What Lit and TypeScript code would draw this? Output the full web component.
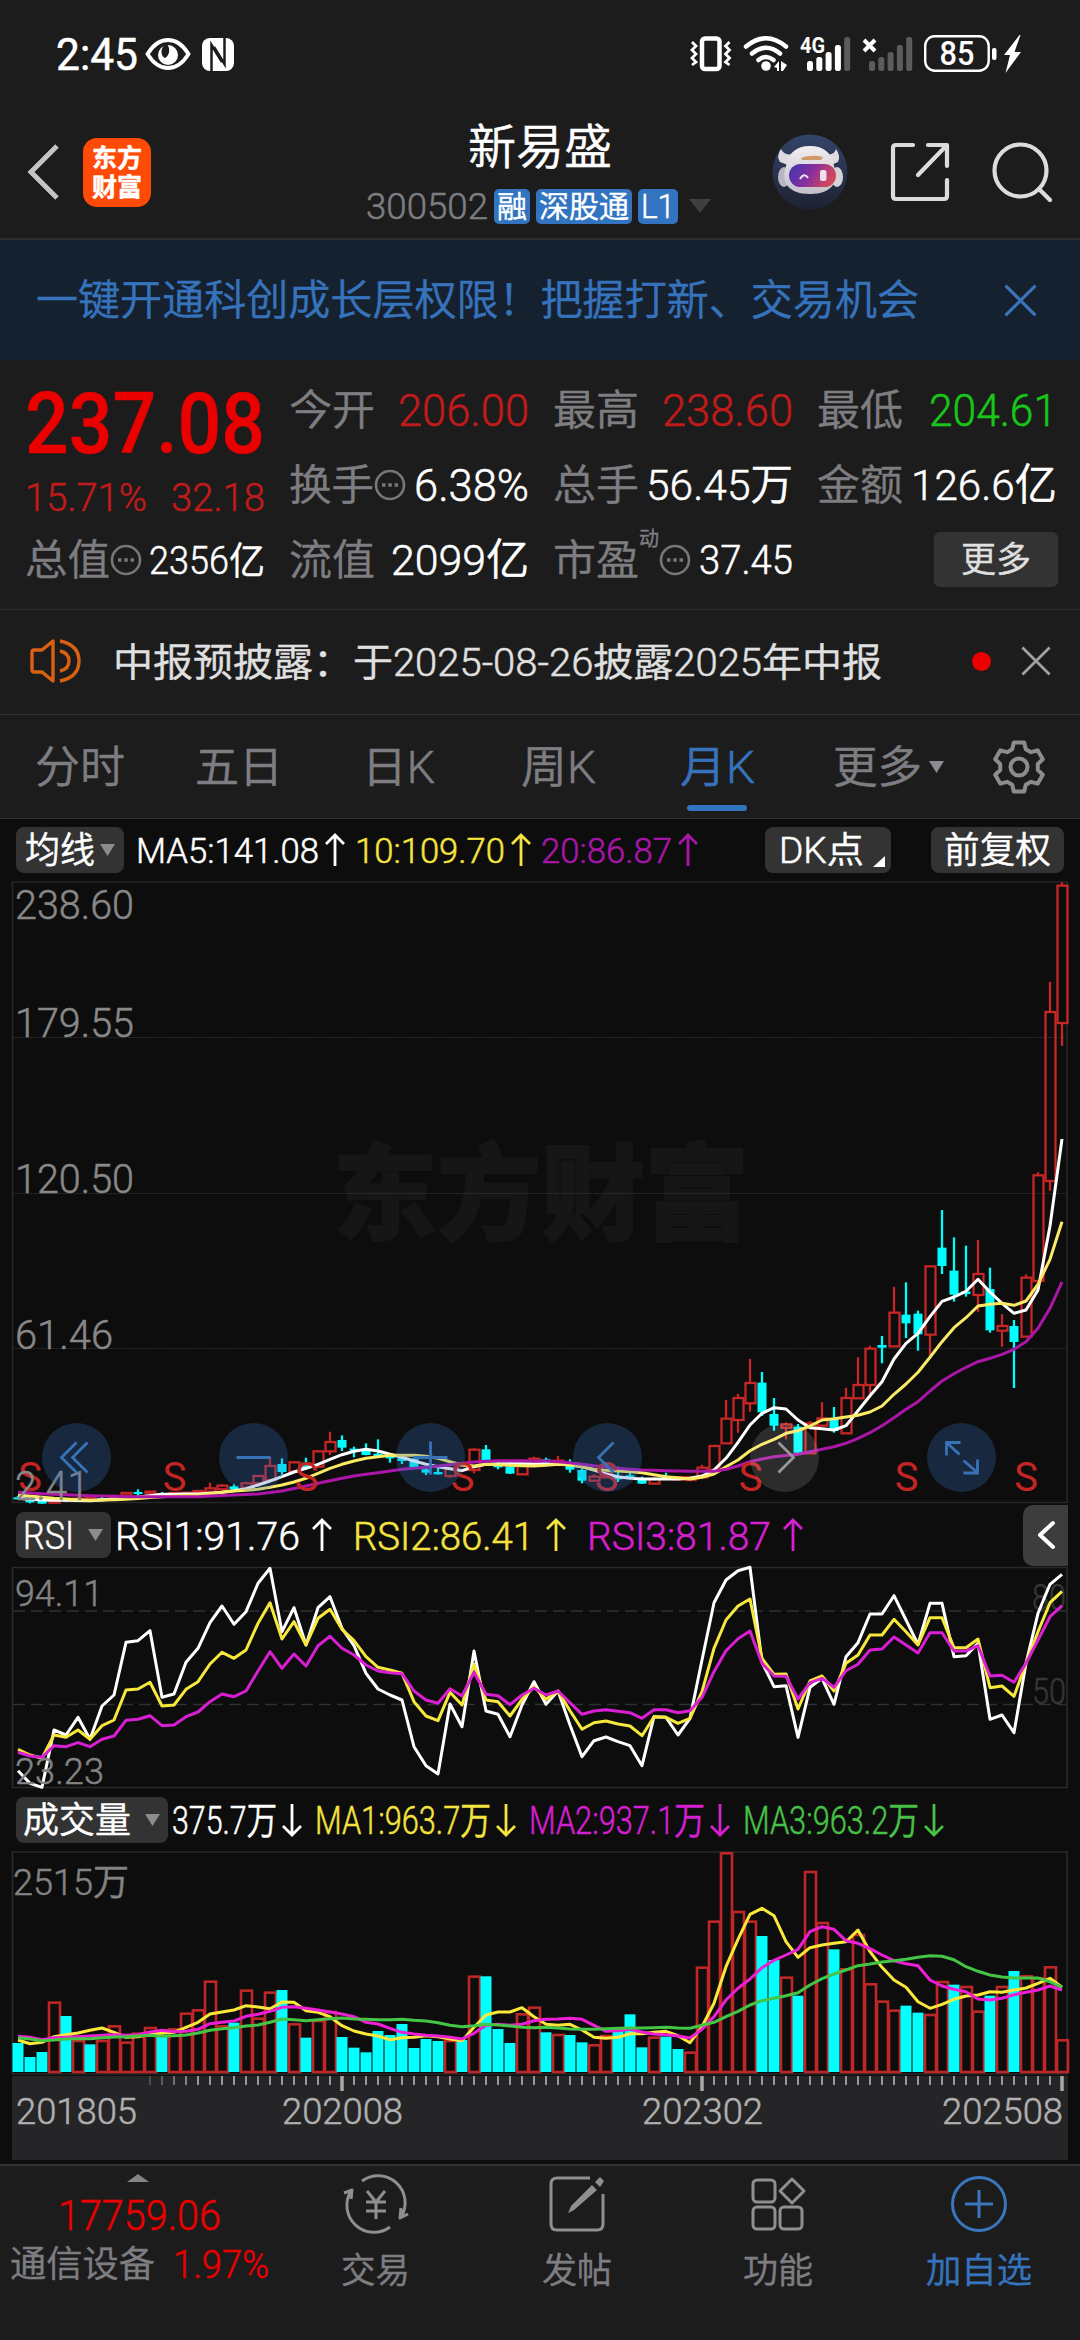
import { LitElement, css, html, svg } from 'lit';
import { customElement } from 'lit/decorators.js';

const COUNT = 88;
const xAt = (i: number) => 18 + i * 12;

// text squeezed to a fixed advance width, vertically centred in its box
const fit = (text: string, width: number, size: number, cls = '') => html`
  <svg class="fit ${cls}" width=${width} height=${size} font-size=${size}>
    <text x="0" y=${size * 0.86} textLength=${width} lengthAdjust="spacingAndGlyphs">${text}</text>
  </svg>`;

const label = (text: string, x: number, y: number, width: number, size: number, cls: string) => svg`
  <text class="label ${cls}" x=${x} y=${y} font-size=${size} textLength=${width} lengthAdjust="spacingAndGlyphs">${text}</text>`;

const line = (values: number[], top: number, cls: string) => svg`
  <polyline class="line ${cls}" points=${values.map((v, i) => `${xAt(i)},${(top + v / 3).toFixed(1)}`).join(' ')}></polyline>`;

// fills the gaps between [index, value] knots
const spread = (knots: number[][]) => {
    const out: number[] = [];
    for (let k = 0; k < knots.length - 1; k++) {
        const [i0, v0] = knots[k];
        const [i1, v1] = knots[k + 1];
        for (let i = i0; i < i1; i++) out.push(v0 + ((v1 - v0) * (i - i0)) / (i1 - i0));
    }
    out.push(knots[knots.length - 1][1]);
    return out;
};

const arrow = (dir: 'up' | 'down', cls: string) => html`
  <svg class="arrow ${cls} ${dir}" width="20" height="34" viewBox="0 0 20 34">
    <path d="M10 33V2M1 11L10 2L19 11"></path>
  </svg>`;

const caret = html`<svg class="caret" width="15" height="12" viewBox="0 0 15 12"><path d="M0 0H15L7.5 12Z"></path></svg>`;
const dots = html`
  <svg class="dots" width="32" height="32" viewBox="0 0 32 32">
    <circle cx="16" cy="16" r="14"></circle>
    <path d="M8 16H11.500M14.300 16H17.800M20.500 16H24"></path>
  </svg>`;
const cross = (size: number, cls: string) => html`
  <svg class="cross ${cls}" width=${size} height=${size} viewBox="0 0 32 32"><path d="M1.500 1.500L30.500 30.500M30.500 1.500L1.500 30.500"></path></svg>`;

// up/down flag, high, body top, body bottom, low
type Candle = [number, number, number, number, number];
const candles: Candle[] = [
    [0, 1008, 1012, 1018, 1020], [0, 1010, 1018, 1027, 1030], [0, 1018, 1020, 1031, 1031], [1, 1018, 1021, 1028, 1028],
    [0, 1014, 1018, 1023, 1026], [1, 1012, 1016, 1022, 1024], [1, 1010, 1014, 1020, 1022], [0, 1010, 1014, 1019, 1022],
    [1, 1006, 1008, 1014, 1016], [1, 997, 999, 1007, 1008], [0, 988, 996, 1002, 1006], [1, 993, 995, 1000, 1004],
    [0, 996, 999, 1004, 1007], [1, 996, 999, 1004, 1006], [1, 996, 998, 1004, 1005], [1, 991, 993, 1000, 1001],
    [1, 968, 985, 995, 997], [1, 972, 977, 988, 990], [0, 973, 979, 988, 990], [1, 965, 970, 983, 985],
    [1, 945, 948, 970, 972], [1, 890, 918, 960, 962], [0, 895, 912, 936, 944], [1, 905, 907, 935, 936],
    [0, 893, 908, 925, 930], [1, 872, 874, 920, 922], [1, 815, 846, 874, 885], [0, 826, 840, 863, 873],
    [0, 860, 866, 872, 892], [0, 850, 868, 885, 886], [0, 838, 881, 888, 890], [0, 880, 888, 895, 908],
    [0, 884, 894, 903, 912], [0, 893, 896, 921, 922], [0, 920, 928, 938, 945], [0, 920, 936, 943, 944],
    [1, 920, 925, 948, 953], [1, 915, 918, 930, 932], [1, 865, 869, 930, 940], [0, 855, 868, 900, 902],
    [0, 903, 915, 922, 928], [0, 905, 920, 941, 942], [1, 912, 915, 943, 944], [1, 890, 896, 912, 914],
    [0, 893, 898, 912, 914], [1, 888, 902, 908, 910], [0, 898, 912, 929, 938], [0, 925, 930, 962, 970],
    [1, 943, 950, 962, 966], [1, 935, 940, 952, 954], [0, 920, 952, 958, 966], [0, 933, 946, 952, 956],
    [0, 950, 956, 971, 972], [1, 950, 957, 971, 972], [0, 938, 950, 956, 958], [1, 948, 952, 958, 960],
    [1, 948, 951, 960, 962], [1, 914, 923, 952, 953], [1, 855, 858, 930, 931], [1, 720, 776, 850, 851],
    [1, 702, 714, 780, 818], [1, 597, 669, 730, 755], [0, 636, 668, 757, 768], [0, 714, 762, 797, 812],
    [1, 787, 793, 803, 838], [0, 792, 800, 878, 880], [1, 783, 790, 880, 881], [1, 727, 775, 797, 800],
    [0, 741, 777, 813, 818], [1, 683, 714, 820, 821], [1, 592, 675, 715, 716], [1, 557, 566, 675, 705],
    [0, 528, 555, 563, 610], [1, 380, 458, 559, 560], [0, 367, 464, 490, 534], [0, 452, 461, 523, 572],
    [1, 317, 319, 524, 585], [0, 150, 263, 318, 342], [0, 232, 332, 404, 425], [0, 257, 394, 402, 410],
    [1, 240, 342, 405, 455], [0, 323, 387, 511, 518], [1, 463, 498, 512, 560], [0, 480, 498, 546, 684],
    [1, 343, 353, 530, 531], [1, 37, 46, 363, 364], [1, -535, -444, 63, 92], [1, -833, -823, -411, -342],
];

const ma5 = spread([
    [0, 1015], [2, 1020], [6, 1022], [9, 1015], [12, 1003], [15, 1002], [17, 997], [18, 992], [19, 986], [20, 975], [21, 963],
    [22, 950], [23, 936], [24, 925], [25, 913], [26, 898], [27, 884], [28, 874], [29, 868], [30, 873], [31, 883], [32, 892],
    [33, 903], [34, 913], [35, 920], [36, 926], [37, 932], [38, 920], [39, 913], [40, 911], [44, 912], [46, 914], [47, 920],
    [48, 930], [49, 942], [50, 950], [51, 955], [52, 957], [55, 957], [56, 955], [57, 948], [58, 930], [59, 895], [60, 847],
    [61, 795], [62, 760], [63, 743], [64, 747], [65, 780], [66, 803], [67, 806], [68, 810], [69, 797], [70, 752], [71, 707],
    [72, 665], [73, 597], [74, 550], [75, 520], [76, 470], [77, 424], [78, 411], [79, 394], [80, 358], [81, 396], [82, 430],
    [83, 460], [84, 450], [85, 390], [86, 198], [87, -63],
]);
const ma10 = spread([
    [0, 1005], [3, 1015], [6, 1021], [9, 1018], [12, 1010], [15, 1005], [18, 993], [20, 988], [21, 982], [22, 975], [23, 966],
    [24, 955], [25, 940], [26, 925], [27, 913], [28, 903], [29, 895], [30, 890], [31, 886], [33, 886], [34, 889], [35, 895],
    [36, 905], [37, 915], [38, 918], [39, 913], [41, 916], [43, 918], [45, 913], [46, 915], [47, 920], [48, 928], [50, 933],
    [52, 938], [54, 950], [56, 957], [57, 952], [58, 942], [59, 920], [60, 900], [61, 872], [62, 853], [63, 838], [64, 820],
    [65, 812], [66, 798], [67, 780], [68, 776], [69, 771], [70, 766], [71, 756], [72, 738], [73, 703], [74, 672], [75, 637],
    [76, 592], [77, 545], [78, 503], [79, 473], [80, 438], [81, 433], [82, 430], [83, 436], [84, 423], [85, 373], [86, 298], [87, 185],
]);
const ma20 = spread([
    [0, 997], [3, 1003], [6, 1007], [9, 1010], [15, 1010], [18, 1005], [20, 1002], [22, 993], [24, 978], [26, 962], [28, 948],
    [30, 938], [32, 928], [34, 922], [36, 914], [38, 906], [40, 902], [44, 903], [46, 908], [48, 917], [50, 925], [52, 930],
    [54, 932], [56, 934], [58, 934], [59, 928], [60, 918], [61, 905], [62, 897], [63, 890], [65, 883], [66, 875], [68, 860],
    [69, 850], [70, 835], [71, 818], [72, 797], [73, 773], [74, 748], [75, 725], [76, 693], [77, 663], [78, 641], [79, 622],
    [80, 605], [81, 595], [82, 583], [83, 568], [84, 545], [85, 505], [86, 445], [87, 366],
]);

const rsi1 = [
    812, 850, 862, 690, 705, 652, 718, 618, 585, 427, 422, 392, 592, 582, 487, 445, 368, 318, 373, 335, 250, 205,
    395, 323, 435, 323, 290, 385, 437, 520, 567, 585, 600, 740, 797, 822, 612, 680, 453, 633, 643, 710, 615, 545,
    613, 573, 675, 770, 722, 711, 725, 737, 797, 650, 652, 705, 655, 480, 308, 240, 212, 202, 487, 560, 557, 712,
    562, 535, 613, 470, 428, 342, 342, 287, 360, 433, 310, 310, 470, 467, 430, 658, 645, 698, 490, 340, 253, 223,
];
const rsi2 = [
    748, 765, 775, 705, 712, 690, 718, 677, 660, 570, 567, 547, 618, 615, 568, 545, 492, 457, 475, 450, 370, 308,
    417, 365, 435, 355, 328, 388, 422, 470, 502, 510, 520, 605, 648, 662, 577, 615, 493, 600, 605, 648, 598, 560,
    598, 573, 632, 688, 668, 663, 672, 678, 707, 650, 652, 670, 655, 575, 445, 360, 318, 297, 475, 523, 522, 627,
    543, 528, 573, 490, 465, 405, 405, 358, 395, 435, 353, 353, 443, 443, 417, 563, 558, 589, 490, 395, 308, 274,
];
const rsi3 = [
    757, 768, 772, 737, 740, 728, 740, 718, 708, 661, 658, 647, 677, 675, 650, 636, 605, 582, 590, 573, 513, 455,
    505, 462, 498, 437, 409, 445, 465, 495, 513, 518, 521, 573, 600, 610, 566, 588, 517, 583, 587, 614, 585, 565,
    585, 573, 608, 643, 633, 629, 634, 638, 655, 629, 629, 638, 632, 592, 515, 452, 416, 393, 490, 528, 529, 597,
    548, 535, 562, 512, 493, 450, 447, 411, 435, 459, 398, 398, 453, 453, 437, 528, 526, 547, 490, 420, 350, 317,
];

const volumes = [
    759, 801, 786, 635, 678, 750, 763, 750, 706, 755, 728, 711, 735, 715, 668, 658, 572, 706, 698, 599, 683, 605,
    600, 700, 743, 690, 663, 741, 773, 787, 723, 735, 702, 774, 747, 753, 750, 750, 557, 559, 717, 759, 670, 650,
    727, 732, 735, 757, 763, 735, 713, 673, 772, 740, 740, 777, 785, 530, 392, 187, 363, 392, 438, 510, 560, 617,
    243, 396, 478, 535, 432, 580, 632, 659, 647, 668, 672, 573, 584, 588, 662, 617, 588, 543, 556, 562, 529, 748,
];
const fallVolumes = new Set([
    0, 1, 2, 4, 6, 12, 18, 22, 24, 27, 28, 29, 30, 31, 32, 33, 34, 35, 37, 39, 40, 41, 44, 46, 47, 50, 51, 52, 54, 55,
    62, 63, 65, 68, 74, 75, 78, 81, 83,
]);
const vol1 = [
    750, 761, 757, 740, 734, 729, 721, 714, 727, 742, 740, 733, 730, 727, 712, 697, 672, 666, 660, 647, 651, 656,
    636, 637, 662, 667, 680, 707, 723, 732, 738, 749, 743, 742, 737, 740, 747, 752, 712, 675, 666, 666, 653, 680,
    703, 706, 703, 720, 742, 745, 742, 731, 731, 727, 724, 737, 758, 710, 640, 530, 448, 373, 355, 377, 455, 502,
    473, 465, 460, 455, 420, 485, 532, 570, 592, 635, 655, 643, 628, 618, 615, 605, 607, 600, 594, 580, 565, 592,
];
const vol2 = [
    739, 742, 749, 743, 742, 740, 738, 736, 734, 736, 734, 726, 721, 725, 724, 718, 701, 697, 693, 679, 673, 664,
    652, 650, 655, 660, 666, 672, 680, 697, 702, 715, 727, 732, 736, 738, 742, 747, 730, 706, 703, 706, 703, 692,
    688, 687, 685, 688, 706, 724, 722, 718, 726, 732, 734, 738, 744, 718, 680, 630, 595, 567, 533, 511, 495, 478,
    425, 410, 418, 452, 460, 476, 495, 512, 521, 527, 570, 588, 598, 605, 627, 630, 625, 614, 607, 600, 588, 600,
];
const vol3 = [
    743, 747, 752, 750, 747, 746, 746, 743, 741, 740, 738, 736, 739, 737, 735, 729, 721, 716, 713, 708, 705, 697,
    687, 689, 692, 689, 686, 684, 687, 688, 689, 689, 688, 691, 693, 698, 706, 710, 707, 703, 705, 708, 712, 713,
    712, 714, 717, 718, 718, 716, 715, 714, 714, 713, 712, 714, 715, 706, 697, 680, 664, 645, 632, 625, 617, 608,
    585, 566, 552, 540, 527, 522, 516, 512, 508, 502, 497, 499, 509, 530, 544, 555, 561, 564, 564, 564, 575, 592,
];

const shared = css`
    :host {
      display: block;
      font-family: Roboto, "Noto Sans CJK SC", sans-serif;
      font-weight: 350;
    }

    svg {
      display: block;
      flex: none;
      overflow: visible;
    }

    .fit, .label { fill: currentColor; stroke: currentColor; stroke-width: 0.5; }
    .fit { color: #fff; }
    .fit.dim { color: #7e7e82; }
    .fit.soft { color: #e0e0e0; }
    .fit.bold { font-weight: 700; }
    .fit.medium { font-weight: 500; }
    .fit.yellow { color: #f5e340; }
    .fit.magenta { color: #d51fd0; }
    .fit.purple { color: #a816a8; }
    .fit.lime { color: #48c048; }
    .fit.hot { color: #eb0000; }
    .fit.red { color: #c01a1a; }
    .fit.green { color: #17c617; }
    .fit.blue { color: #3673bc; }
`;

@customElement('kline-chart')
export class KlineChart extends LitElement {
    private candle([up, high, top, bottom, low]: Candle, i: number) {
        const x = xAt(i);
        const y = (v: number) => 1160 + v / 3;
        if (!up) {
            return svg`
        <path class="fall" d="M${x} ${y(high)}V${y(low)}"></path>
        <rect class="fall-body" x=${x - 4.5} y=${y(top)} width="9" height=${y(bottom) - y(top)}></rect>`;
        }
        return svg`
      <path class="rise" d="M${x} ${y(high)}V${y(top)}M${x} ${y(bottom)}V${y(low)}"></path>
      <rect class="rise" x=${x - 4.5} y=${y(top)} width="10" height=${y(bottom) - y(top)}></rect>`;
    }

    render() {
        return html`
      <svg width="1080" height="623" viewBox="0 881 1080 623">
        <text class="mark" x="333" y="1232" font-size="104" textLength="416">东方财富</text>
        <path class="grid" d="M13 1037.500H1066M13 1193.500H1066M13 1348.500H1066"></path>
        <path class="frame" d="M12.500 882H1067V1502.500H12.500Z"></path>
        ${candles.map((c, i) => this.candle(c, i))}
        ${line(ma5, 1160, 'white')}
        ${line(ma10, 1160, 'yellow')}
        ${line(ma20, 1160, 'purple')}
        ${[30, 174.5, 306.5, 462.5, 606.5, 750.5, 906.5, 1026].map((x) => svg`<text class="sell" x=${x} y="1491" font-size="40">S</text>`)}
        ${label('238.60', 15, 919, 119, 40, 'tick')}
        ${label('179.55', 15, 1037, 119, 40, 'tick')}
        ${label('120.50', 15, 1193, 119, 40, 'tick')}
        ${label('61.46', 15, 1349, 98, 40, 'tick')}
        ${label('2.41', 15, 1500, 74, 40, 'tick')}
      </svg>
      <div class="tools">
        <svg viewBox="-34.500 -34.500 69 69"><circle r="34.500"></circle><path d="M0 -15L-15 0L0 15M11 -15L-4 0L11 15"></path></svg>
        <svg viewBox="-34.500 -34.500 69 69"><circle r="34.500"></circle><path d="M-17 0H17"></path></svg>
        <svg viewBox="-34.500 -34.500 69 69"><circle r="34.500"></circle><path d="M-17 0H17M0 -16V17"></path></svg>
        <svg viewBox="-34.500 -34.500 69 69"><circle r="34.500"></circle><path d="M6 -15L-9 0L6 15"></path></svg>
        <svg class="off" viewBox="-34.500 -34.500 69 69"><circle r="34.500"></circle><path d="M-6 -15L9 0L-6 15"></path></svg>
        <svg viewBox="-34.500 -34.500 69 69"><circle r="34.500"></circle><path d="M-15 -2V-15H-1M-15 -15L-2 -3M2 3L16 15M16 2V15.500H2"></path></svg>
      </div>
    `;
    }

    static styles = [shared, css`
    :host { position: relative; }

    .mark { fill: #161616; stroke: #161616; stroke-width: 2; font-weight: 900; }
    .grid { fill: none; stroke: #303030; stroke-width: 1; stroke-dasharray: 1.500 1; }
    .frame { fill: none; stroke: #262626; stroke-width: 1.700; }
    .rise { fill: none; stroke: #c62626; stroke-width: 2.300; }
    .fall { fill: none; stroke: #00fbfb; stroke-width: 2.300; }
    .fall-body { fill: #00ffff; }
    .line { fill: none; stroke-width: 3; stroke-linejoin: round; }
    .line.white { stroke: #fff; }
    .line.yellow { stroke: #fbea66; }
    .line.purple { stroke: #ab16a9; }
    .sell { fill: #c32424; text-anchor: middle; font-weight: 400; }
    .tick { color: #888; }

    .tools {
      position: absolute;
      left: 42px;
      bottom: 12px;
      display: flex;
      gap: 108px;
    }

    .tools svg { width: 69px; height: 69px; }
    .tools circle { fill: rgba(50, 116, 200, 0.27); }
    .tools path { fill: none; stroke: #3873b8; stroke-width: 2.800; }
    .tools .off circle { fill: rgba(255, 255, 255, 0.13); }
    .tools .off path { stroke: #98989b; }
  `];
}

@customElement('rsi-chart')
export class RsiChart extends LitElement {
    render() {
        return html`
      <svg width="1080" height="222" viewBox="0 1567 1080 222">
        <path class="frame" d="M12.500 1567.500H1067V1787.500H12.500Z"></path>
        <path class="grid" d="M13 1611H1066M13 1704.500H1066"></path>
        ${label('80', 1032, 1610, 34, 36, 'level')}
        ${label('50', 1032, 1704, 34, 36, 'level')}
        ${line(rsi1, 1500, 'white')}
        ${line(rsi2, 1500, 'yellow')}
        ${line(rsi3, 1500, 'magenta')}
        ${label('94.11', 15, 1606, 88, 37, 'tick')}
        ${label('23.23', 15, 1784, 89, 37, 'tick')}
      </svg>
    `;
    }

    static styles = [shared, css`
    .frame { fill: none; stroke: #2a2a2a; stroke-width: 1.700; }
    .grid { fill: none; stroke: #303030; stroke-width: 1.500; stroke-dasharray: 12 6; }
    .line { fill: none; stroke-width: 3; stroke-linejoin: round; }
    .line.white { stroke: #fff; }
    .line.yellow { stroke: #f8e83c; }
    .line.magenta { stroke: #d820d2; }
    .tick { color: #838383; }
    .level { color: #363636; }
  `];
}

@customElement('volume-chart')
export class VolumeChart extends LitElement {
    private bar(value: number, i: number) {
        const y = 1790 + value / 3;
        return fallVolumes.has(i)
            ? svg`<rect class="fall" x=${xAt(i) - 5.5} y=${y} width="11" height=${2072 - y}></rect>`
            : svg`<rect class="rise" x=${xAt(i) - 5} y=${y + 1} width="11" height=${2071 - y}></rect>`;
    }

    render() {
        return html`
      <svg width="1080" height="309" viewBox="0 1851 1080 309">
        <path class="frame" d="M12.500 1852H1067V2074H12.500Z"></path>
        ${volumes.map((v, i) => this.bar(v, i))}
        ${line(vol1, 1790, 'yellow')}
        ${line(vol2, 1790, 'magenta')}
        ${line(vol3, 1790, 'green')}
        ${label('2515万', 13, 1895, 116, 36, 'tick')}
        <rect class="axis" x="12" y="2076" width="1056" height="84"></rect>
        ${Array.from({ length: COUNT - 11 }, (_, k) => k + 11).map((i) => (i - 27) % 30 === 0
            ? svg`<path class="major" d="M${xAt(i)} 2076V2091"></path>`
            : svg`<path class="minor" opacity=${Math.min(1, (i - 9) / 6)} d="M${xAt(i)} 2076V2085"></path>`)}
        ${label('201805', 16, 2124, 121, 37, 'date')}
        ${label('202008', 282, 2124, 121, 37, 'date')}
        ${label('202302', 642, 2124, 121, 37, 'date')}
        ${label('202508', 942, 2124, 121, 37, 'date')}
      </svg>
    `;
    }

    static styles = [shared, css`
    .frame { fill: none; stroke: #2a2a2a; stroke-width: 1.700; }
    .rise { fill: none; stroke: #bf2727; stroke-width: 2.600; }
    .fall { fill: #00ffff; }
    .line { fill: none; stroke-width: 3; stroke-linejoin: round; }
    .line.yellow { stroke: #fce83a; }
    .line.magenta { stroke: #ec1fd4; }
    .line.green { stroke: #45c545; }
    .axis { fill: #252527; }
    .major { stroke: #a9a9a9; stroke-width: 3.500; }
    .minor { stroke: #98989a; stroke-width: 2; }
    .tick { color: #838383; }
    .date { color: #b0b0b0; }
  `];
}

@customElement('app-root')
export class AppRoot extends LitElement {
    private bars(x: number, live: number) {
        return [10, 14, 19, 26, 34].map((h, i) => svg`
      <rect class=${i < live ? 'on' : 'off'} x=${x + i * 9.3} y=${36 - h} width="6" height=${h} rx="2.500"></rect>`);
    }

    private gear() {
        const pts: string[] = [];
        for (let t = 0; t < 6; t++) {
            const mid = t * 60 - 90;
            for (const [off, r] of [[-21, 19], [-12, 25], [12, 25], [21, 19]]) {
                const a = ((mid + off) * Math.PI) / 180;
                pts.push(`${(r * Math.cos(a)).toFixed(1)},${(r * Math.sin(a)).toFixed(1)}`);
            }
        }
        return pts.join(' ');
    }

    private statusBar() {
        return html`
      <div class="status">
        <div class="status-side">
          ${fit('2:45', 82, 44, 'regular')}
          <svg class="eye" width="46" height="32" viewBox="0 0 46 32">
            <path class="ring" d="M2.500 16C8 7 15 2 23 2S38 7 43.500 16C38 25 31 30 23 30S8 25 2.500 16Z"></path>
            <circle class="on" cx="23" cy="17" r="10"></circle>
            <path class="pupil" d="M22 6C15 8 15 18 20 20C24 18 26 11 22 6Z"></path>
          </svg>
          <svg class="nfc" width="32" height="33" viewBox="0 0 32 33">
            <rect class="on" width="32" height="33" rx="8"></rect>
            <path class="cut" d="M9.500 33V7L20 24M22.500 0V26L12 9"></path>
          </svg>
        </div>
        <svg class="signals" width="332" height="38" viewBox="0 0 332 38">
          <rect class="stroke" x="12" y="3.500" width="17.500" height="30.500" rx="3"></rect>
          <path class="thin" d="M2 7L6 11L2 15L6 19L2 23L6 27L2 30M39.500 7L35.500 11L39.500 15L35.500 19L39.500 23L35.500 27L39.500 30"></path>
          <path class="arc" d="M56 11.500Q76 -5 96 11.500M62 18.500Q76 7 90 18.500M68.500 25Q76 19 83.500 25"></path>
          <circle class="on" cx="76" cy="31" r="4.800"></circle>
          <path class="on" d="M84 32L89 26V36H87V33ZM91 26L97 30L93 36H91Z"></path>
          <text class="net" x="110" y="18" font-size="22" textLength="25" lengthAdjust="spacingAndGlyphs">4G</text>
          ${this.bars(117, 4)}
          <path class="x" d="M174 5L185 16M185 5L174 16"></path>
          ${this.bars(179, 0)}
          <rect class="case" x="235.200" y="1.200" width="63.500" height="34.500" rx="9.500"></rect>
          <rect class="on" x="302" y="13" width="4.500" height="12" rx="2"></rect>
          <text class="level" x="249.500" y="29.500" font-size="33" textLength="35" lengthAdjust="spacingAndGlyphs">85</text>
          <path class="on" d="M329.500 0L314 20H320L315.500 38L331 17H324.500L330.500 0Z"></path>
        </svg>
      </div>`;
    }

    private header() {
        return html`
      <header>
        <div class="head-left">
          <svg width="33" height="56" viewBox="0 0 33 56"><path class="back" d="M30 2L4 28L30 54"></path></svg>
          <div class="logo">${fit('东方', 50, 25, 'bold')}${fit('财富', 50, 25, 'bold')}</div>
        </div>
        <div class="head-title">
          ${fit('新易盛', 144, 48)}
          <div class="code">
            ${fit('300502', 122, 36, 'dim')}
            <span class="badge">${fit('融', 30, 30)}</span>
            <span class="badge">${fit('深股通', 90, 30)}</span>
            <span class="badge">${fit('L1', 34, 34)}</span>
            <svg class="pick" width="22" height="14" viewBox="0 0 22 14"><path d="M0 0H22L11 14Z"></path></svg>
          </div>
        </div>
        <div class="head-right">
          <svg width="76" height="76" viewBox="0 0 76 76">
            <defs>
              <linearGradient id="sky" x1="0" y1="0" x2="0" y2="1"><stop offset="0" stop-color="#33446a"></stop><stop offset="1" stop-color="#1d2230"></stop></linearGradient>
              <linearGradient id="shell" x1="0" y1="0" x2="0" y2="1"><stop offset="0" stop-color="#f1eef0"></stop><stop offset="1" stop-color="#c3bfc8"></stop></linearGradient>
              <linearGradient id="visor" x1="0" y1="0" x2="1" y2="0.300"><stop offset="0" stop-color="#3b35b4"></stop><stop offset="0.550" stop-color="#8a2f9c"></stop><stop offset="1" stop-color="#d0475c"></stop></linearGradient>
            </defs>
            <circle cx="38" cy="38" r="37.500" fill="url(#sky)"></circle>
            <path d="M9 15Q4 22 8 28L16 31L21 20Q12 22 9 15ZM64 15Q69 22 66 28L59 31L54 20Q62 22 64 15Z" fill="#dddbe0"></path>
            <ellipse cx="12" cy="43" rx="6" ry="10" fill="#b9b6c0"></ellipse>
            <ellipse cx="65" cy="43" rx="6" ry="10" fill="#d5d2d8"></ellipse>
            <path d="M38 12C52 12 60 19 62 32C67 47 61 60 38 60S9 47 14 32C16 19 24 12 38 12Z" fill="url(#shell)"></path>
            <rect x="17" y="30" width="47" height="23" rx="11.500" fill="url(#visor)"></rect>
            <path d="M28 45Q32 38 36 44" fill="none" stroke="#e9dff8" stroke-width="2"></path>
            <rect x="48" y="36" width="6.500" height="11" rx="2" fill="#f0ddea"></rect>
            <path d="M29 24Q39 20 51 23L49 26H30Z" fill="#cf9a6a"></path>
          </svg>
          <svg width="60" height="60" viewBox="0 0 60 60"><path class="tool" d="M23 3H6Q3 3 3 6V54Q3 57 6 57H54Q57 57 57 54V38M38 3H57V24M56 4L28 33"></path></svg>
          <svg width="60" height="60" viewBox="0 0 60 60"><circle class="tool" cx="28.500" cy="28.500" r="26"></circle><path class="tool" d="M47 47L58 58"></path></svg>
        </div>
      </header>`;
    }

    private quote() {
        return html`
      <section class="quote">
        <div class="price">
          ${fit('237.08', 240, 86, 'hot medium')}
          <div class="change">${fit('15.71%', 122, 39, 'red')}${fit('32.18', 94, 39, 'red')}</div>
        </div>
        <div class="cell">${fit('今开', 86, 42, 'dim')}${fit('206.00', 131, 44, 'red')}</div>
        <div class="cell">${fit('最高', 86, 42, 'dim')}${fit('238.60', 131, 44, 'red')}</div>
        <div class="cell">${fit('最低', 86, 42, 'dim')}${fit('204.61', 128, 44, 'green')}</div>
        <div class="cell"><div class="name">${fit('换手', 85, 42, 'dim')}${dots}</div>${fit('6.38%', 115, 44)}</div>
        <div class="cell">${fit('总手', 86, 42, 'dim')}${fit('56.45万', 147, 43)}</div>
        <div class="cell">${fit('金额', 86, 42, 'dim')}${fit('126.6亿', 146, 43)}</div>
        <div class="cell"><div class="name">${fit('总值', 85, 42, 'dim')}${dots}</div>${fit('2356亿', 116, 38)}</div>
        <div class="cell">${fit('流值', 86, 42, 'dim')}${fit('2099亿', 138, 43)}</div>
        <div class="cell"><div class="name">${fit('市盈', 86, 42, 'dim')}<span class="sup">${fit('动', 20, 20, 'dim')}</span>${dots}</div>${fit('37.45', 94, 40)}</div>
        <div class="cell end"><span class="more">${fit('更多', 70, 35, 'soft')}</span></div>
      </section>`;
    }

    private tabs() {
        const items: [string, number][] = [['分时', 90], ['五日', 88], ['日K', 73], ['周K', 75], ['月K', 75]];
        return html`
      <nav class="tabs">
        ${items.map(([text, width]) => html`
          <div class="tab ${text === '月K' ? 'current' : ''}">${fit(text, width, 44, text === '月K' ? 'blue' : 'dim')}</div>`)}
        <div class="tab-more">${fit('更多', 89, 44, 'dim')}${caret}</div>
        <svg width="52" height="52" viewBox="-26 -26 52 52"><polygon class="gear" points=${this.gear()}></polygon><circle class="gear" r="8.500"></circle></svg>
      </nav>`;
    }

    render() {
        return html`
      ${this.statusBar()}
      ${this.header()}
      <div class="banner">${fit('一键开通科创成长层权限！把握打新、交易机会', 883, 42, 'blue')}${cross(33, 'blue')}</div>
      ${this.quote()}
      <div class="notice">
        <svg width="52" height="44" viewBox="0 0 52 44"><path class="horn" d="M2 13Q2 11 4 11H12L23 2V42L12 33H4Q2 33 2 31ZM30 2Q49 6 49 22T30 42M30 12Q39 14 39 22T30 32"></path></svg>
        ${fit('中报预披露：于2025-08-26披露2025年中报', 769, 39, 'soft')}
        <i class="dot"></i>
        ${cross(30, 'grey')}
      </div>
      ${this.tabs()}
      <main>
        <div class="bar ma">
          <span class="chip">${fit('均线', 70, 36)}${caret}</span>
          <span class="pair">${fit('MA5:141.08', 183, 35)}${arrow('up', 'white')}</span>
          <span class="pair">${fit('10:109.70', 150, 35, 'yellow')}${arrow('up', 'yellow')}</span>
          <span class="pair">${fit('20:86.87', 131, 35, 'purple')}${arrow('up', 'purple')}</span>
          <span class="chip dk">${fit('DK点', 85, 36)}<svg width="12" height="11" viewBox="0 0 12 11"><path class="corner" d="M12 0V11H0Z"></path></svg></span>
          <span class="chip right">${fit('前复权', 107, 36)}</span>
        </div>
        <kline-chart></kline-chart>
        <div class="bar rsi">
          <span class="chip wide">${fit('RSI', 51, 38)}${caret}</span>
          <span class="pair">${fit('RSI1:91.76', 185, 39)}${arrow('up', 'white')}</span>
          <span class="pair">${fit('RSI2:86.41', 181, 39, 'yellow')}${arrow('up', 'yellow')}</span>
          <span class="pair">${fit('RSI3:81.87', 184, 39, 'magenta')}${arrow('up', 'magenta')}</span>
          <span class="drawer"><svg width="18" height="28" viewBox="0 0 18 28"><path d="M16 2L3 14L16 26"></path></svg></span>
        </div>
        <rsi-chart></rsi-chart>
        <div class="bar vol">
          <span class="chip wide">${fit('成交量', 108, 36)}${caret}</span>
          <span class="pair">${fit('375.7万', 105, 38)}${arrow('down', 'white')}</span>
          <span class="pair">${fit('MA1:963.7万', 176, 38, 'yellow')}${arrow('down', 'yellow')}</span>
          <span class="pair">${fit('MA2:937.1万', 176, 38, 'magenta')}${arrow('down', 'magenta')}</span>
          <span class="pair">${fit('MA3:963.2万', 176, 38, 'lime')}${arrow('down', 'lime')}</span>
        </div>
        <volume-chart></volume-chart>
      </main>
      <footer>
        <div class="index">
          <svg class="peak" width="22" height="8" viewBox="0 0 22 8"><path d="M0 8L11 0L22 8Z"></path></svg>
          ${fit('17759.06', 163, 42, 'hot')}
          <div class="sector">${fit('通信设备', 145, 36, 'dim')}${fit('1.97%', 96, 38, 'hot')}</div>
        </div>
        <div class="action">
          <svg width="66" height="58" viewBox="-33 -29 66 58">
            <path class="icon" d="M-14 -23A27 27 0 0 1 25 13M14 23A27 27 0 0 1 -25 -13M-32 -11L-24 -14L-25 -5M32 10L24 14L25 4M-9 -13L0 -2L9 -13M0 -2V15M-10 -2H10M-10 7H10"></path>
          </svg>
          ${fit('交易', 69, 35, 'dim')}
        </div>
        <div class="action">
          <svg width="66" height="58" viewBox="-33 -29 66 58">
            <path class="icon" d="M13 -26H-20Q-26 -26 -26 -20V20Q-26 26 -20 26H20Q26 26 26 20V-10"></path>
            <path class="pen" d="M15 -19L20 -14L-3 6L-9 9L-6 2ZM18 -22L23 -27L27 -23L23 -17Z"></path>
          </svg>
          ${fit('发帖', 70, 35, 'dim')}
        </div>
        <div class="action">
          <svg width="66" height="58" viewBox="-33 -29 66 58">
            <rect class="icon" x="-25" y="-24" width="22" height="22" rx="4"></rect>
            <rect class="icon" x="-25" y="3" width="22" height="22" rx="4"></rect>
            <rect class="icon" x="2" y="3" width="22" height="22" rx="4"></rect>
            <path class="icon" d="M14 -25L26 -13L14 -1L2 -13Z"></path>
          </svg>
          ${fit('功能', 70, 35, 'dim')}
        </div>
        <div class="action">
          <svg width="66" height="58" viewBox="-33 -29 66 58"><circle class="icon on" r="26.500"></circle><path class="icon on" d="M-14 0H14M0 -14V14"></path></svg>
          ${fit('加自选', 106, 35, 'blue')}
        </div>
      </footer>
    `;
    }

    static styles = [shared, css`
    :host {
      width: 1080px;
      height: 2340px;
      overflow: hidden;
      background: #1c1c1c;
      box-sizing: border-box;
    }

    .status {
      display: flex;
      justify-content: space-between;
      align-items: center;
      height: 108px;
      padding: 0 58px 0 56px;
      box-sizing: border-box;
    }

    .status-side { display: flex; align-items: center; }
    .regular { font-weight: 400; }
    .eye { margin-left: 7px; }
    .nfc { margin-left: 11px; }
    .status .on { fill: #fff; }
    .status .off { fill: #5c5c5c; }
    .ring, .stroke, .arc, .thin, .x, .case { fill: none; stroke: #fff; }
    .ring { stroke-width: 3.800; }
    .pupil { fill: #1c1c1c; }
    .cut { fill: none; stroke: #1c1c1c; stroke-width: 2.500; }
    .stroke { stroke-width: 4.500; }
    .thin { stroke-width: 2.800; }
    .arc { stroke-width: 4.500; stroke-linecap: round; }
    .x { stroke-width: 4; }
    .case { stroke-width: 2.400; }
    .net { fill: #fff; font-weight: 700; }
    .level { fill: #fff; font-weight: 500; }

    header {
      display: grid;
      grid-template-columns: 1fr auto 1fr;
      height: 132px;
      padding: 0 28px 2px 27px;
      border-bottom: 2px solid #2c2e31;
      box-sizing: border-box;
    }

    .head-left { display: flex; align-items: center; gap: 23px; }
    .back { fill: none; stroke: #c4c4c4; stroke-width: 5; }

    .logo {
      display: flex;
      flex-direction: column;
      align-items: center;
      justify-content: center;
      gap: 4px;
      width: 68px;
      height: 69px;
      border-radius: 14px;
      background: #fe4a07;
    }

    .head-title {
      display: flex;
      flex-direction: column;
      align-items: center;
      padding-top: 15px;
      gap: 17px;
    }

    .code { display: flex; align-items: center; gap: 6px; margin-right: 3px; }

    .badge {
      display: flex;
      align-items: center;
      height: 35px;
      padding: 0 3px;
      border-radius: 5px;
      background: #3274c0;
    }

    .pick { margin-left: 5px; fill: #3e3e3e; }

    .head-right { display: flex; align-items: center; justify-content: flex-end; gap: 42px; }
    .tool { fill: none; stroke: #dcdcdc; stroke-width: 4.200; stroke-linecap: round; stroke-linejoin: round; }

    .banner {
      display: flex;
      align-items: center;
      justify-content: space-between;
      height: 120px;
      padding: 0 43px 0 36px;
      background: #15212f;
    }

    .cross path { fill: none; stroke-width: 3; }
    .cross.blue { stroke: #3a74bb; }
    .cross.grey { stroke: #a0a0a0; }

    .quote {
      display: grid;
      grid-template-columns: repeat(4, 240px);
      grid-template-rows: repeat(3, 75px);
      column-gap: 24px;
      height: 250px;
      padding: 12px 25px 0 25px;
      border-bottom: 1px solid #2b2b2b;
      box-sizing: border-box;
    }

    .price {
      grid-row: span 2;
      display: flex;
      flex-direction: column;
      padding-top: 7px;
      gap: 12px;
    }

    .change { display: flex; justify-content: space-between; }
    .cell { display: flex; align-items: center; justify-content: space-between; }
    .name { display: flex; align-items: center; }
    .cell.end { justify-content: flex-end; }
    .sup { align-self: flex-start; margin-top: -10px; }
    .dots { fill: none; stroke: #77777a; stroke-width: 2.600; }
    .dots path { stroke-width: 3.500; }

    .more {
      display: flex;
      align-items: center;
      justify-content: center;
      width: 124px;
      height: 55px;
      margin-right: -1px;
      border-radius: 6px;
      background: #333;
    }

    .notice {
      display: flex;
      align-items: center;
      height: 105px;
      padding: 0 29px 2px 30px;
      border-bottom: 1px solid #323232;
      box-sizing: border-box;
    }

    .notice .fit { margin-left: 31px; }
    .horn { fill: none; stroke: #d9610f; stroke-width: 3.400; stroke-linejoin: round; }
    .dot { width: 19px; height: 19px; margin: 0 30px 0 auto; border-radius: 50%; background: #eb0000; }

    .tabs {
      display: flex;
      align-items: stretch;
      height: 104px;
      padding-right: 35px;
      border-bottom: 1px solid #323232;
      box-sizing: border-box;
    }

    .tabs > svg { align-self: center; margin-left: auto; }
    .tab { display: flex; align-items: center; justify-content: center; width: 159.500px; position: relative; }

    .tab.current::after {
      content: "";
      position: absolute;
      left: 49px;
      bottom: 7px;
      width: 60px;
      height: 6px;
      border-radius: 3px;
      background: #3274c0;
    }

    .tab-more { display: flex; align-items: center; gap: 7px; margin-left: 35px; }
    .caret { fill: #8b8b90; }
    .gear { fill: none; stroke: #8c8c90; stroke-width: 4; stroke-linejoin: round; }

    main { background: #0d0d0d; padding-bottom: 4px; }
    .bar { display: flex; align-items: center; box-sizing: border-box; padding: 0 16px; }
    .bar.ma { height: 62px; }
    .bar.rsi { height: 63px; padding: 0 12px 1px 16px; }
    .bar.vol { height: 62px; }

    .chip {
      display: flex;
      align-items: center;
      gap: 5px;
      height: 46px;
      padding: 0 9px;
      border-radius: 8px;
      background: #333;
    }

    .chip.wide { gap: 14px; padding: 0 8px 0 7px; }
    .chip.dk { margin-left: auto; gap: 9px; padding: 0 6px 0 14px; }
    .chip.dk svg:last-child { align-self: flex-end; margin-bottom: 6px; }
    .chip.right { margin-left: 40px; padding: 0 13px; }
    .corner { fill: #fff; }
    .pair { display: flex; align-items: center; gap: 6px; margin-left: 10px; }
    .bar.ma .chip + .pair { margin-left: 12px; }
    .bar.rsi .pair { gap: 12px; margin-left: 21px; }
    .bar.rsi .chip + .pair { margin-left: 4px; }
    .bar.vol .pair { margin-left: 13px; gap: 5px; }
    .bar.vol .chip + .pair { margin-left: 4px; }

    .arrow { fill: none; stroke-width: 2.800; stroke: #fff; }
    .arrow.down { transform: scaleY(-1); }
    .arrow.yellow { stroke: #f5e340; }
    .arrow.magenta { stroke: #d51fd0; }
    .arrow.purple { stroke: #a816a8; }
    .arrow.lime { stroke: #48c048; }

    .drawer {
      display: flex;
      align-items: center;
      justify-content: center;
      width: 45px;
      height: 61px;
      margin-left: auto;
      border-radius: 10px 0 0 10px;
      background: #3d3d3d;
    }

    .drawer path { fill: none; stroke: #fff; stroke-width: 4; stroke-linecap: round; stroke-linejoin: round; }

    footer {
      display: flex;
      height: 176px;
      border-top: 2px solid #333;
      box-sizing: border-box;
    }

    .index {
      display: flex;
      flex-direction: column;
      align-items: center;
      width: 279px;
      margin-right: -4px;
      padding-top: 8px;
      box-sizing: border-box;
    }

    .peak { margin-right: 3px; fill: #858585; }
    .index > .fit { margin-top: 12px; }
    .sector { display: flex; align-items: center; gap: 18px; margin-top: 9px; }
    .action { display: flex; flex-direction: column; align-items: center; gap: 20px; width: 201px; padding-top: 9px; }
    .icon { fill: none; stroke: #8f8f92; stroke-width: 3; stroke-linejoin: round; }
    .icon.on { stroke: #3a76bd; }
    .pen { fill: #8f8f92; }
  `];
}

declare global {
    interface HTMLElementTagNameMap {
        'app-root': AppRoot;
        'kline-chart': KlineChart;
        'rsi-chart': RsiChart;
        'volume-chart': VolumeChart;
    }
}
